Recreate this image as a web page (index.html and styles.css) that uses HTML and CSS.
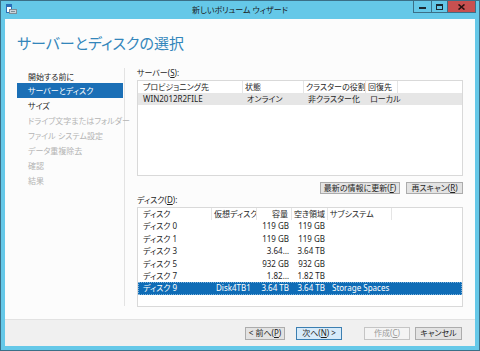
FILE: index.html
```html
<!DOCTYPE html>
<html lang="ja">
<head>
  <meta charset="UTF-8" />
  <title>新しいボリューム ウィザード</title>
  <link rel="stylesheet" href="styles.css">
</head>
<body>
  <div class="window">
    <div class="titlebar">
      <svg class="app-icon" width="11" height="11" viewBox="0 0 11 11">
        <rect x="0.5" y="0.5" width="5" height="8" fill="#ffffff" stroke="#2a6fb8"/>
        <rect x="1" y="1" width="4" height="2" fill="#2a6fb8"/>
        <rect x="3.5" y="5.5" width="7" height="4" fill="#c9d3da" stroke="#7d8c96"/>
        <rect x="5" y="7" width="4" height="1" fill="#7d8c96"/>
      </svg>
      <div class="title">新しいボリューム ウィザード</div>
      <div class="caption">
        <div class="cap-btn cap-min"><svg width="7" height="2"><rect width="7" height="2" fill="#1c2a33"/></svg></div>
        <div class="cap-btn cap-max"><svg width="7" height="6"><rect x="0.5" y="0.5" width="6" height="5" fill="none" stroke="#1c2a33"/><rect width="7" height="2" fill="#1c2a33"/></svg></div>
        <div class="cap-btn cap-close"><svg width="7" height="6"><path d="M0.5 0.5 L6.5 5.5 M6.5 0.5 L0.5 5.5" stroke="#2a1212" stroke-width="1.6"/></svg></div>
      </div>
    </div>

    <div class="client">
      <div class="header">
        <h1>サーバーとディスクの選択</h1>
      </div>

      <div class="main">
        <ul class="steps">
          <li>開始する前に</li>
          <li class="current">サーバーとディスク</li>
          <li>サイズ</li>
          <li class="disabled">ドライブ文字またはフォルダー</li>
          <li class="disabled">ファイル システム設定</li>
          <li class="disabled">データ重複除去</li>
          <li class="disabled">確認</li>
          <li class="disabled">結果</li>
        </ul>

        <div class="content">
          <div class="field-label">サーバー(<u>S</u>):</div>
          <div class="list-box server-list">
            <div class="row head">
              <div class="cell">プロビジョニング先</div>
              <div class="cell">状態</div>
              <div class="cell">クラスターの役割</div>
              <div class="cell">回復先</div>
              <div class="cell last"></div>
            </div>
            <div class="row inactive-sel">
              <div class="cell">WIN2012R2FILE</div>
              <div class="cell">オンライン</div>
              <div class="cell">非クラスター化</div>
              <div class="cell">ローカル</div>
              <div class="cell"></div>
            </div>
          </div>

          <div class="list-actions">
            <button class="btn refresh">最新の情報に更新(<u>F</u>)</button>
            <button class="btn rescan">再スキャン(<u>R</u>)</button>
          </div>

          <div class="field-label">ディスク(<u>D</u>):</div>
          <div class="list-box disk-list">
            <div class="row head">
              <div class="cell">ディスク</div>
              <div class="cell">仮想ディスク</div>
              <div class="cell num">容量</div>
              <div class="cell num">空き領域</div>
              <div class="cell">サブシステム</div>
              <div class="cell last"></div>
            </div>
            <div class="row">
              <div class="cell">ディスク 0</div><div class="cell"></div>
              <div class="cell num">119 GB</div><div class="cell num">119 GB</div>
              <div class="cell"></div><div class="cell"></div>
            </div>
            <div class="row">
              <div class="cell">ディスク 1</div><div class="cell"></div>
              <div class="cell num">119 GB</div><div class="cell num">119 GB</div>
              <div class="cell"></div><div class="cell"></div>
            </div>
            <div class="row">
              <div class="cell">ディスク 3</div><div class="cell"></div>
              <div class="cell num">3.64…</div><div class="cell num">3.64 TB</div>
              <div class="cell"></div><div class="cell"></div>
            </div>
            <div class="row">
              <div class="cell">ディスク 5</div><div class="cell"></div>
              <div class="cell num">932 GB</div><div class="cell num">932 GB</div>
              <div class="cell"></div><div class="cell"></div>
            </div>
            <div class="row">
              <div class="cell">ディスク 7</div><div class="cell"></div>
              <div class="cell num">1.82…</div><div class="cell num">1.82 TB</div>
              <div class="cell"></div><div class="cell"></div>
            </div>
            <div class="row selected">
              <div class="cell">ディスク 9</div><div class="cell">Disk4TB1</div>
              <div class="cell num">3.64 TB</div><div class="cell num">3.64 TB</div>
              <div class="cell">Storage Spaces</div><div class="cell"></div>
            </div>
          </div>
        </div>
      </div>

      <div class="footer">
        <button class="btn prev">&lt; 前へ(<u>P</u>)</button>
        <button class="btn next">次へ(<u>N</u>) &gt;</button>
        <button class="btn create" disabled>作成(<u>C</u>)</button>
        <button class="btn cancel">キャンセル</button>
      </div>
    </div>
  </div>
</body>
</html>
```

FILE: styles.css
```css
* {
  box-sizing: border-box;
}
body {
  margin: 0;
  font-family: "Noto Sans", "Noto Sans CJK JP", sans-serif;
  font-size: 8px;
  color: #1e1e1e;
  font-feature-settings: "palt";
}
.window {
  width: 480px;
  height: 351px;
  background-color: #65c8e8;
  border: 1px solid #3b6f87;
  display: flex;
  flex-direction: column;
}
.titlebar {
  height: 18px;
  display: grid;
  grid-template-columns: 1fr auto 1fr;
  align-items: start;
}
.app-icon {
  margin: 3px 0 0 5px;
}
.title {
  line-height: 18px;
  color: #1a1a1a;
}
.caption {
  justify-self: end;
  display: flex;
  margin-right: 3px;
  height: 12px;
}
.cap-btn {
  display: flex;
  align-items: center;
  justify-content: center;
  border: 1px solid #3b6f87;
  border-top: none;
}
.cap-min {
  width: 19px;
  align-items: flex-end;
  padding-bottom: 3px;
}
.cap-max {
  width: 16px;
  border-left: none;
}
.cap-close {
  width: 28px;
  border-left: none;
  background-color: #c75050;
}
.client {
  flex: 1;
  margin: 0 4px 4px;
  background-color: #fcfcfc;
  display: flex;
  flex-direction: column;
}
.header {
  height: 49px;
  padding: 15px 0 0 12px;
}
h1 {
  margin: 0;
  font-weight: normal;
  font-size: 15px;
  line-height: 18px;
  color: #3386bb;
}
.main {
  flex: 1;
  display: flex;
  padding-left: 12px;
}
.steps {
  list-style: none;
  margin: 0;
  padding: 2px 0 0;
  width: 108px;
  height: 238px;
  border-right: 1px solid #e3e3e3;
}
.steps li {
  height: 15px;
  line-height: 15px;
  padding-left: 11px;
  margin-right: 1px;
  white-space: nowrap;
}
.steps li:first-child {
  height: 13px;
  line-height: 13px;
}
.steps li.current {
  background-color: #1b6fb6;
  color: #fff;
}
.steps li.disabled {
  color: #b4b4b4;
}
.content {
  margin-left: 12px;
  width: 326px;
}
.field-label {
  height: 10px;
  line-height: 10px;
}
.list-box {
  margin-top: 2px;
  border: 1px solid #d9d9d9;
  background-color: #fff;
}
.server-list {
  height: 96px;
}
.disk-list {
  height: 100px;
}
.row {
  display: grid;
  height: 12px;
  line-height: 12px;
  white-space: nowrap;
}
.server-list .row {
  grid-template-columns: 105px 61px 62px 32px 1fr;
}
.disk-list .row {
  grid-template-columns: 74px 45px 35px 36px 64px 1fr;
  height: 12.4px;
  line-height: 12.4px;
}
.cell {
  padding: 0 3px 0 4px;
}
.row .cell:first-child {
  padding-left: 5px;
}
.cell.num {
  text-align: right;
}
.head .cell {
  border-right: 1px solid #e5e5e5;
  padding: 0 3px 0 2px;
  overflow: hidden;
}
.head .cell.last {
  border-right: none;
}
.row.inactive-sel {
  background-color: #e6e6e6;
}
.row.selected {
  background-color: #0f6cb6;
  color: #fff;
  outline: 1px dotted #7fb3dc;
  outline-offset: -1px;
}
.list-actions {
  display: flex;
  justify-content: flex-end;
  gap: 6px;
  margin: 6px 0 0;
  height: 13px;
}
.btn {
  font-family: inherit;
  font-size: 8px;
  font-feature-settings: "palt";
  color: #1e1e1e;
  height: 12px;
  padding: 0;
  line-height: 10px;
  background-color: #e3e3e3;
  border: 1px solid #acacac;
}
.refresh {
  width: 80px;
}
.rescan {
  width: 57px;
}
.footer {
  height: 27px;
  border-top: 1px solid #e2e2e2;
  background-color: #f0f0f0;
  display: flex;
  align-items: center;
  justify-content: flex-end;
  padding-right: 13px;
}
.footer .btn {
  height: 13px;
}
.prev {
  width: 40px;
}
.next {
  width: 46px;
  margin-left: 11px;
  background-color: #d7ebfa;
  border-color: #3c7fb1;
}
.create {
  width: 46px;
  margin-left: 22px;
  background-color: #f4f4f4;
  border-color: #c5c5c5;
  color: #9a9a9a;
}
.cancel {
  width: 47px;
  margin-left: 5px;
}
```
